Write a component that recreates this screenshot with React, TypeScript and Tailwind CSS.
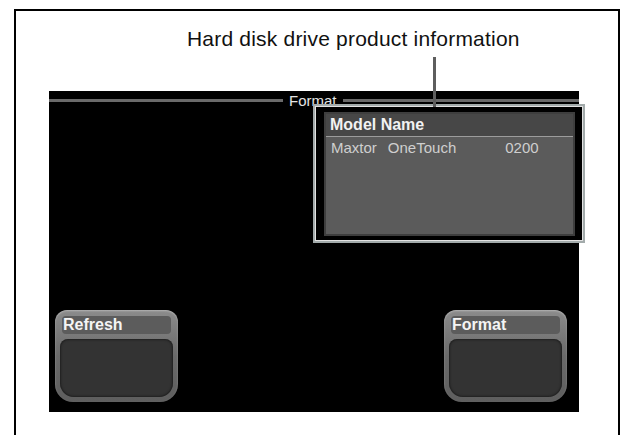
export default function App() {
  return (
    <div className="w-[624px] h-[435px] bg-white overflow-hidden font-['Liberation_Sans',Arial,sans-serif]">
      <div className="relative ml-[14px] mt-[9px] w-[606px] h-[426px] border-2 border-b-0 border-black">
        {/* Callout */}
        <div className="h-[80px] pt-[16px] pl-[171px]">
          <p className="text-[21px] leading-[24px] text-[#111] tracking-[0.2px]">Hard disk drive product information</p>
        </div>
        <div className="absolute left-[417px] top-[46px] w-[3px] h-[50px] bg-[#5e5e5e] z-20" />

        {/* Device screen */}
        <div className="relative ml-[33px] w-[530px] h-[321px] bg-black flex flex-col">
          <div className="h-[19px] flex items-center">
            <div className="w-[234px] h-[3px] bg-[#6a6a6a]" />
            <span className="px-[6px] text-[15px] leading-[15px] text-[#e4e4e4]">Format</span>
            <div className="flex-1 h-[3px] bg-[#6a6a6a]" />
          </div>

          {/* Product info box */}
          <div className="absolute left-[264px] top-[13px] w-[272px] h-[139px] border-2 border-[#a3abab] z-10">
            <div className="h-full border border-[#e2e2e2] bg-black pl-[8px] pr-[7px] pt-[5px] pb-[4px]">
              <div className="h-full bg-[#5b5b5b] border-[2px] border-[#3e3e3e] flex flex-col">
                <div className="h-[22px] bg-[#474747] flex items-center px-[4px]">
                  <span className="text-[16px] font-bold text-[#f2f2f2] leading-none">Model Name</span>
                </div>
                <div className="h-px bg-[#9c9c9c]" />
                <div className="flex items-center h-[20px] px-[5px] text-[15px] leading-none text-[#cfcfcf]">
                  <span>Maxtor</span>
                  <span className="ml-[11px]">OneTouch</span>
                  <span className="ml-[49px]">0200</span>
                </div>
              </div>
            </div>
          </div>

          <div className="flex-1" />

          <div className="flex justify-between pl-[6px] pr-[12px] pb-[10px]">
            <PanelButton label="Refresh" />
            <PanelButton label="Format" />
          </div>
        </div>
      </div>
    </div>
  )
}

function PanelButton({ label }: { label: string }) {
  return (
    <div className="w-[123px] h-[92px] rounded-t-[12px] rounded-b-[18px] bg-gradient-to-b from-[#8c8c8c] via-[#6a6a6a] to-[#5e5e5e] p-[5px] flex flex-col shadow-[inset_0_1px_2px_rgba(255,255,255,0.35)]">
      <div className="mx-[2px] mt-[1px] h-[18px] rounded-[4px] bg-[#5c5c5c] flex items-center px-[1px]">
        <span className="text-[16px] font-bold leading-none text-[#f4f4f4]">{label}</span>
      </div>
      <div className="mt-[5px] flex-1 rounded-t-[8px] rounded-b-[14px] bg-[#333333] shadow-[inset_0_0_3px_rgba(0,0,0,0.8)]" />
    </div>
  )
}
